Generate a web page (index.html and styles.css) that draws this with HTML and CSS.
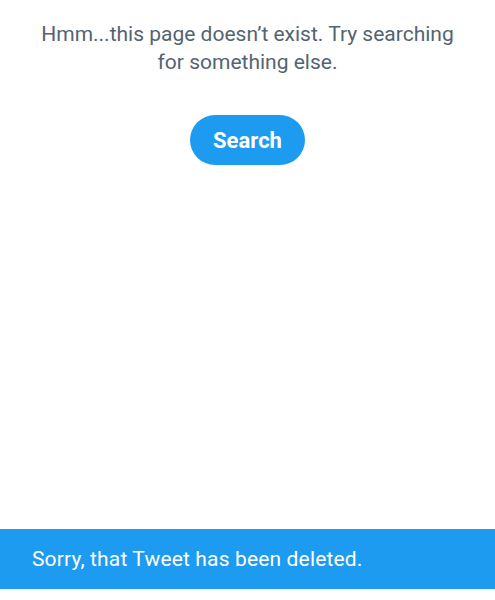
FILE: index.html
```html
<!DOCTYPE html>
<html lang="en">
<head>
    <meta charset="UTF-8">
    <meta name="viewport" content="width=device-width, initial-scale=1.0">
    <title>Page not found</title>
    <link rel="stylesheet" href="styles.css">
</head>
<body>

    <main class="empty-state">
        <p class="message">Hmm...this page doesn’t exist. Try searching for something else.</p>
        <button class="search-btn">Search</button>
    </main>

    <!-- Toast at the bottom -->
    <div class="toast">Sorry, that Tweet has been deleted.</div>

</body>
</html>
```

FILE: styles.css
```css
body {
    font-family: 'Roboto', 'Liberation Sans', sans-serif;
    background-color: #ffffff;
    margin: 0;
    height: 600px;
    display: flex;
    flex-direction: column;
}

.empty-state {
    flex: 1;
    display: flex;
    flex-direction: column;
    align-items: center;
    padding: 20px 40px 0;
}

.message {
    margin: 0;
    font-size: 21px;
    line-height: 28px;
    color: #536471;
    text-align: center;
}

.search-btn {
    margin-top: 39px;
    width: 115px;
    height: 50px;
    border: none;
    border-radius: 25px;
    background-color: #1d9bf0;
    color: #ffffff;
    font-family: inherit;
    font-size: 22px;
    font-weight: bold;
    cursor: pointer;
}

.toast {
    margin-bottom: 11px;
    height: 60px;
    display: flex;
    align-items: center;
    padding: 0 32px;
    background-color: #1d9bf0;
    color: #ffffff;
    font-size: 21px;
    letter-spacing: 0.15px;
}
```
